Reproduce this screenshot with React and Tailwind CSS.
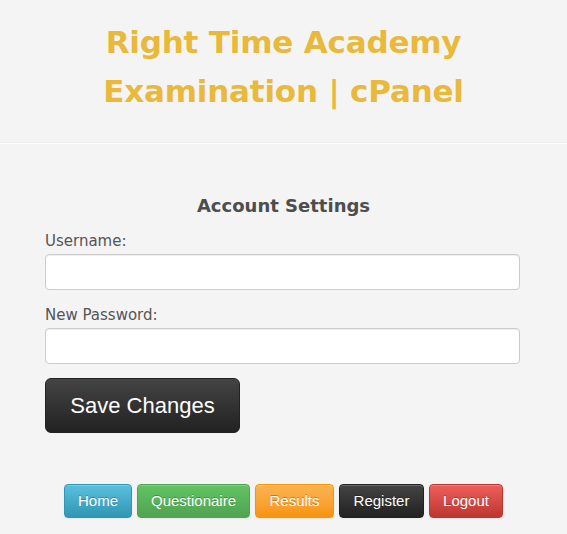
import React, { useState } from "react";

function NavButton({ label, className }) {
  return (
    <button
      type="button"
      className={`h-[34px] px-3 rounded-[4px] border text-[15px] text-white [text-shadow:0_-1px_0_rgba(0,0,0,0.25)] shadow-[inset_0_1px_0_rgba(255,255,255,0.2),0_1px_2px_rgba(0,0,0,0.05)] ${className}`}
    >
      {label}
    </button>
  );
}

function App() {
  const [username, setUsername] = useState("");
  const [password, setPassword] = useState("");

  return (
    <div className="min-h-screen w-full bg-[#f4f4f4] font-['DejaVu_Sans',Verdana,sans-serif]">

      {/* HEADER */}
      <div className="pt-[18px] pb-[27px] border-b border-white shadow-[0_-1px_0_#ebebeb_inset]">
        <h1 className="text-center font-bold text-[#e9b93c] text-[31px] leading-[49px] tracking-[-0.2px]">
          Right Time Academy
          <br />
          Examination | cPanel
        </h1>
      </div>

      {/* FORM */}
      <div className="px-[45px] pt-[48px]">
        <h2 className="text-center font-bold text-[18px] text-[#4d4d4d] mb-[12px]">
          Account Settings
        </h2>

        <form onSubmit={(e) => e.preventDefault()}>
          <label className="block text-[15px] text-[#555] leading-[20px] mb-[3px]">
            Username:
          </label>
          <input
            type="text"
            value={username}
            onChange={(e) => setUsername(e.target.value)}
            className="block w-[475px] h-[36px] px-2 bg-white border border-[#ccc] rounded-[4px] outline-none shadow-[inset_0_1px_1px_rgba(0,0,0,0.075)]"
          />

          <label className="block text-[15px] text-[#555] leading-[20px] mt-[15px] mb-[3px]">
            New Password:
          </label>
          <input
            type="password"
            value={password}
            onChange={(e) => setPassword(e.target.value)}
            className="block w-[475px] h-[36px] px-2 bg-white border border-[#ccc] rounded-[4px] outline-none shadow-[inset_0_1px_1px_rgba(0,0,0,0.075)]"
          />

          <button
            type="submit"
            className="mt-[14px] w-[195px] h-[55px] rounded-[6px] border border-[#222] bg-gradient-to-b from-[#444] to-[#222] text-white text-[22px] font-['Liberation_Sans',Arial,sans-serif]"
          >
            Save Changes
          </button>
        </form>
      </div>

      {/* NAV */}
      <div className="flex justify-center gap-[5px] mt-[51px] pb-4 font-['Liberation_Sans',Arial,sans-serif]">
        <NavButton label="Home" className="w-[68px] border-[#2f96b4] bg-gradient-to-b from-[#5bc0de] to-[#2f96b4]" />
        <NavButton label="Questionaire" className="w-[113px] border-[#51a351] bg-gradient-to-b from-[#62c462] to-[#51a351]" />
        <NavButton label="Results" className="w-[79px] border-[#f89406] bg-gradient-to-b from-[#fbb450] to-[#f89406]" />
        <NavButton label="Register" className="w-[85px] border-[#222] bg-gradient-to-b from-[#444] to-[#222]" />
        <NavButton label="Logout" className="w-[74px] border-[#bd362f] bg-gradient-to-b from-[#ee5f5b] to-[#bd362f]" />
      </div>
    </div>
  );
}

export default App;
